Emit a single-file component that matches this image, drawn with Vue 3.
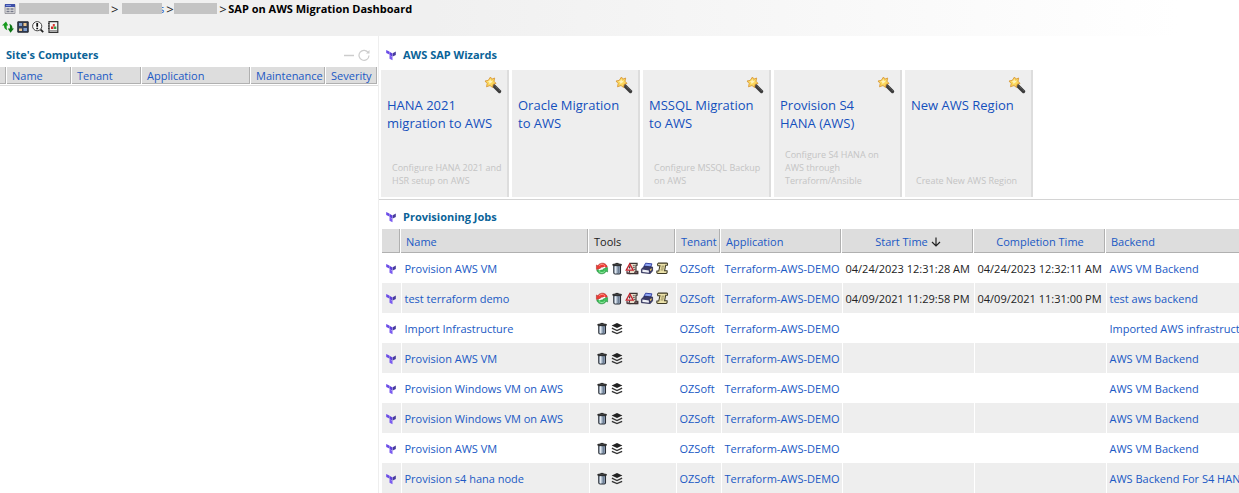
<script setup>
const siteColumns = [
  { label: '', width: 7 },
  { label: 'Name', width: 65 },
  { label: 'Tenant', width: 70 },
  { label: 'Application', width: 109 },
  { label: 'Maintenance', width: 75 },
  { label: 'Severity', width: 52 },
]

const wizards = [
  { title: 'HANA 2021 migration to AWS', note: 'Configure HANA 2021 and HSR setup on AWS' },
  { title: 'Oracle Migration to AWS', note: '' },
  { title: 'MSSQL Migration to AWS', note: 'Configure MSSQL Backup on AWS' },
  { title: 'Provision S4 HANA (AWS)', note: 'Configure S4 HANA on AWS through Terraform/Ansible' },
  { title: 'New AWS Region', note: 'Create New AWS Region' },
]

const full = ['sync', 'trash', 'plan', 'print', 'scroll']
const short = ['trash', 'layers']
const jobs = [
  { name: 'Provision AWS VM', tools: full, start: '04/24/2023 12:31:28 AM', end: '04/24/2023 12:32:11 AM', backend: 'AWS VM Backend' },
  { name: 'test terraform demo', tools: full, start: '04/09/2021 11:29:58 PM', end: '04/09/2021 11:31:00 PM', backend: 'test aws backend' },
  { name: 'Import Infrastructure', tools: short, backend: 'Imported AWS infrastructure' },
  { name: 'Provision AWS VM', tools: short, backend: 'AWS VM Backend' },
  { name: 'Provision Windows VM on AWS', tools: short, backend: 'AWS VM Backend' },
  { name: 'Provision Windows VM on AWS', tools: short, backend: 'AWS VM Backend' },
  { name: 'Provision AWS VM', tools: short, backend: 'AWS VM Backend' },
  { name: 'Provision s4 hana node', tools: short, backend: 'AWS Backend For S4 HANA' },
]
</script>

<template>
  <div class="page">
    <svg class="sprite" aria-hidden="true">
      <symbol id="terraform" viewBox="0 0 12 12">
        <path d="M1.200 1 4.400 2.600v3L1.200 4z" fill="#6a4be8" />
        <path d="M4.500 2.800 7.500 4.500v3.300L4.500 6.200z" fill="#5c3fdc" />
        <path d="M4.500 6.300 7.500 8v3.300L4.500 9.700z" fill="#7b5cf0" />
        <path d="M10.800 2.600 7.700 4.300v3.300l3.100-1.700z" fill="#463a9c" />
      </symbol>
      <symbol id="wand" viewBox="0 0 18 18">
        <path d="m9 9 6.500 6.500" stroke="#3a3a3a" stroke-width="3.400" stroke-linecap="round" />
        <path d="m10.500 9.700 5 5" stroke="#777" stroke-width="1" stroke-dasharray="1 1" />
        <path d="m6.500 1 1.200 2.200 3-1.200-.7 3.200 2 2.200-2.800.8-.7 3.300L6 9.500l-3.500 1.300.7-3.300L1 5l3.200-.6z" fill="#fbd75b" stroke="#d99b3c" stroke-width=".9" stroke-linejoin="round" />
        <path d="m6.200 3 .8 2 2-.5-1.200 1.700L5.500 8 5 6 3.200 5.300l2-.3z" fill="#fff3b8" />
      </symbol>
      <symbol id="sync" viewBox="0 0 14 14">
        <path d="M1 8V3.200l1.500.9C4.200.800 9.200.200 11.700 3.200l1 2-3.700 2C8 5.400 6.700 5.200 5.300 6l1.500 1.200z" fill="#ee3b36" stroke="#a52a24" stroke-width=".6" />
        <path d="M13 6v4.800l-1.500-.9c-1.700 3.300-6.700 3.900-9.200.9l-1-1.800L5 7.500c1 1.300 2.300 1.500 3.700.7L7.200 7z" fill="#3fc05a" stroke="#218238" stroke-width=".6" />
        <path d="m3.500 8.500 7-3" stroke="#fff" stroke-width="1.400" />
        <path d="M4 4C6 2 8.500 2 10 4" stroke="#ff9a8a" fill="none" />
        <path d="M4 10.300c2 1.600 4.500 1.500 6-.5" stroke="#9be8a8" fill="none" />
      </symbol>
      <symbol id="trash" viewBox="0 0 12 14">
        <path d="M2.500 4h7.300v7.600q0 1.400-1.400 1.400H4q-1.500 0-1.500-1.400z" fill="#8fa0b4" stroke="#252a32" stroke-width="1.100" />
        <path d="M4.500 4.500v7.800" stroke="#e4ebf2" stroke-width="1.900" />
        <path d="M7.800 4.500v7.800" stroke="#6d7c90" stroke-width="1.200" />
        <path d="M1.500 3.500V2.600Q6 1.200 10.700 2.600v.9z" fill="#666" stroke="#1b1b1b" />
        <path d="M4.500 1.500h3" stroke="#222" />
      </symbol>
      <symbol id="plan" viewBox="0 0 14 14">
        <path d="M5 1.500h7.500v2h-1.200v6.500h2v2.500H4z" fill="#e6dcc9" stroke="#3b3431" stroke-width="1.200" />
        <path d="M8 4h2M8 6h2M9 8h2" stroke="#555" />
        <path d="m4.500 2 3.800 6.800H.8z" fill="#f7eeee" stroke="#c3252e" stroke-width="1.400" />
        <path d="M4.500 4.500V7" stroke="#26201f" stroke-width="1.200" />
        <path d="M1.500 9.800v2.700H6M10 10.500h3v2h-3z" fill="#8c6870" stroke="#3c3032" />
      </symbol>
      <symbol id="print" viewBox="0 0 14 14">
        <path d="m5.500 1.300 6.800.7-1.500 4L3.500 5z" fill="#8fa6f5" stroke="#2c3a9c" />
        <path d="m2 6.500 3-2 8 1v4L10.500 12.500 1 11.500V8z" fill="#3a3a66" stroke="#23264e" stroke-width=".8" />
        <path d="m2 8.200 7 1v2.500l-7-.8z" fill="#f0f2f8" />
        <path d="m10 8 2-1.500v2L10.500 10z" fill="#e8c86a" />
      </symbol>
      <symbol id="scroll" viewBox="0 0 14 14">
        <path d="M3 1.200h9q1.500.3.800 2.300H11L9.800 9.500h2.700q.5 2.500-1.300 3H2.800Q.8 12 1.500 9.800h2L4.800 4H2.500Q1.500 2 3 1.200z" fill="#ece2aa" stroke="#3f3b25" stroke-width="1.100" />
        <path d="M6.500 4.500h3M6 6.500h3M5.500 8.500h3" stroke="#8a8254" />
      </symbol>
      <symbol id="layers" viewBox="0 0 14 14">
        <path d="m7 1 5.800 2.700L7 6.400 1.200 3.700z" fill="#222" />
        <path d="m1.500 6.700 5.500 2.500 5.500-2.500M1.500 10 7 12.500l5.500-2.500" fill="none" stroke="#333" stroke-width="1.500" />
      </symbol>
      <symbol id="window" viewBox="0 0 12 12">
        <path d="M1 1.500h10v9H1z" fill="#dcdcdc" stroke="#8b8b93" stroke-width=".8" />
        <path d="M1 1h10v3H1z" fill="#3d4fa8" />
        <path d="M2 2.500h5" stroke="#7d94e0" />
        <path d="M2.500 6h3M6.500 6h3M2.500 8.500h3M6.500 8.500h3" stroke="#777b8c" stroke-width="1.300" />
      </symbol>
      <symbol id="reload" viewBox="0 0 12 12">
        <path d="M4 .5 0 4.500h2c0 2.500 1 4 3.500 4.800-.8-1.500-1-2.800-.8-4.800H6.200z" fill="#159a1c" />
        <path d="M8.500 11.800 12 7.500h-1.500c0-2.500-1-4-3.200-4.800.6 1.500.8 2.800.6 4.800H5.800z" fill="#0c7614" />
      </symbol>
      <symbol id="tiles" viewBox="0 0 12 12">
        <path d="M.8.800h10.400v10.400H.8z" fill="#34405a" stroke="#20242c" />
        <path d="M6.500 2h3v3h-3zM2 7.500h3v2.500H2z" fill="#ecc58c" />
        <path d="M2 2h3v3H2zM6.500 7h3.500v3H6.500z" fill="#7f9fd0" />
      </symbol>
      <symbol id="inspect" viewBox="0 0 12 12">
        <path d="m8.200 8.200 3 3" stroke="#222" stroke-width="1.800" />
        <circle cx="5.200" cy="5.200" r="4.600" fill="#fafafa" stroke="#444" />
        <path d="M5.200 2v3.800M5.200 6.800v1.500" stroke="#111" stroke-width="1.800" />
      </symbol>
      <symbol id="report" viewBox="0 0 12 12">
        <path d="M2 .7h8.800v10.600H2z" fill="#f5f5f5" stroke="#333" stroke-width="1.200" />
        <path d="M1 2.500h1.500M1 5h1.500M1 7.500h1.500" stroke="#333" />
        <path d="M5.800 3h2v2.500h-2z" fill="#d83a32" />
        <path d="M4 5.500h2.500v2.500H4z" fill="#d22d27" />
        <path d="M7 5.500h2.300v2.500H7z" fill="#35a04b" />
        <path d="M3 9.800h7" stroke="#777" />
      </symbol>
    </svg>

    <header class="topbar">
      <nav class="crumbs" aria-label="Breadcrumb">
        <svg class="icon12"><use href="#window" /></svg>
        <span class="mask mask-site"></span>
        <span class="sep">&gt;</span>
        <a class="tail" href="#"><span class="mask mask-group"></span>s</a>
        <span class="sep">&gt;</span>
        <span class="mask mask-item"></span>
        <span class="sep">&gt;</span>
        <h1>SAP on AWS Migration Dashboard</h1>
      </nav>
      <div class="toolbar">
        <button v-for="n in ['reload', 'tiles', 'inspect', 'report']" :key="n" :aria-label="n">
          <svg class="icon12"><use :href="'#' + n" /></svg>
        </button>
      </div>
    </header>

    <main class="panes">
      <section class="site">
        <div class="site-head">
          <h2>Site's Computers</h2>
          <button aria-label="Collapse">
            <svg class="icon12" viewBox="0 0 12 12"><path d="M1 6.500h10" stroke="#ccc" stroke-width="1.500" /></svg>
          </button>
          <button aria-label="Refresh">
            <svg class="icon12" viewBox="0 0 12 12">
              <path d="M10.300 3.800A5 5 0 1 0 11 6.500" fill="none" stroke="#ccc" stroke-width="1.200" />
              <path d="M11.500 1v3.500H8z" fill="#ccc" />
            </svg>
          </button>
        </div>
        <div class="site-list">
          <table class="site-table">
            <colgroup><col v-for="c in siteColumns" :key="c.label" :style="{ width: c.width + 'px' }" /></colgroup>
            <thead>
              <tr><th v-for="c in siteColumns" :key="c.label"><a v-if="c.label" href="#">{{ c.label }}</a></th></tr>
            </thead>
          </table>
        </div>
      </section>

      <div class="content">
        <section class="wizards">
          <div class="section-head"><svg class="icon12"><use href="#terraform" /></svg><h2>AWS SAP Wizards</h2></div>
          <div class="cards">
            <article v-for="w in wizards" :key="w.title" class="card">
              <svg class="wand"><use href="#wand" /></svg>
              <a href="#">{{ w.title }}</a>
              <p>{{ w.note }}</p>
            </article>
          </div>
        </section>

        <section class="jobs">
          <div class="section-head"><svg class="icon12"><use href="#terraform" /></svg><h2>Provisioning Jobs</h2></div>
          <div class="job-list">
            <table class="job-table">
              <colgroup>
                <col class="c-icon" /><col class="c-name" /><col class="c-tools" /><col class="c-tenant" />
                <col class="c-app" /><col class="c-time" /><col class="c-time" /><col />
              </colgroup>
              <thead>
                <tr>
                  <th></th>
                  <th><a href="#">Name</a></th>
                  <th>Tools</th>
                  <th><a href="#">Tenant</a></th>
                  <th><a href="#">Application</a></th>
                  <th class="mid">
                    <a href="#">Start Time</a>
                    <svg class="arrow" viewBox="0 0 10 10"><path d="M5 .5v8.500M1 5l4 4 4-4" fill="none" stroke="#222" stroke-width="1.200" /></svg>
                  </th>
                  <th class="mid"><a href="#">Completion Time</a></th>
                  <th><a href="#">Backend</a></th>
                </tr>
              </thead>
              <tbody>
                <tr v-for="(j, i) in jobs" :key="i">
                  <td><svg class="icon12"><use href="#terraform" /></svg></td>
                  <td><a href="#">{{ j.name }}</a></td>
                  <td>
                    <div class="tools">
                      <button v-for="t in j.tools" :key="t" :aria-label="t"><svg class="tool"><use :href="'#' + t" /></svg></button>
                    </div>
                  </td>
                  <td><a href="#">OZSoft</a></td>
                  <td><a href="#">Terraform-AWS-DEMO</a></td>
                  <td>{{ j.start }}</td>
                  <td>{{ j.end }}</td>
                  <td><a href="#">{{ j.backend }}</a></td>
                </tr>
              </tbody>
            </table>
          </div>
        </section>
      </div>
    </main>
  </div>
</template>

<style>
body { margin: 0; background: #fff; }
</style>

<style scoped>
.page {
  height: 100vh;
  display: flex;
  flex-direction: column;
  overflow: hidden;
  font: 11px/16px "Open Sans", "Noto Sans", sans-serif;
  color: #222;
}
.sprite { display: none; }
a { color: #2059c4; text-decoration: none; }
button { display: flex; padding: 0; border: 0; background: none; }
h1, h2, p { margin: 0; }
h2 { font-size: 11px; line-height: 18px; font-weight: 700; color: #0a6398; }
.icon12 { display: block; width: 12px; height: 12px; flex: none; }

.topbar { flex: none; height: 36px; background: linear-gradient(90deg, #f0f0f0 35%, #fff 95%); }
.crumbs { display: flex; align-items: center; height: 18px; padding-left: 4px; }
.mask { flex: none; height: 11px; background: #c4c4c4; margin-bottom: 2px; }
.mask-site { width: 90px; margin-left: 3px; }
.mask-group { position: relative; width: 40px; margin-right: -3px; }
.mask-item { width: 43px; }
.sep { width: 8px; padding-left: 2px; font-size: 13px; }
.tail { display: flex; align-items: center; padding-left: 3px; }
h1 { padding-left: 1px; font-size: 11px; line-height: 18px; color: #000; white-space: nowrap; }
.toolbar { display: flex; gap: 3px; padding: 3px 0 0 2px; }

.panes { flex: 1; display: flex; min-height: 0; }
.site { width: 378px; flex: none; }
.site-head { display: flex; align-items: center; gap: 3px; padding: 10px 8px 3px 6px; }
.site-head h2 { flex: 1; }
table { border-collapse: collapse; table-layout: fixed; width: 100%; }
th, td { padding: 1px 0 0 3px; text-align: left; font-weight: 400; white-space: nowrap; }
th { background: #ddd; box-shadow: inset -1px 0 #fff, inset -2px -1px #b0b0b0; }
.site-list { padding-bottom: 1px; border-bottom: 1px solid #ddd; }
.site-table th { height: 17px; padding: 0 0 0 5px; }

.content { flex: 1; min-width: 0; border-left: 1px solid #eee; overflow: hidden; }
.section-head { display: flex; align-items: center; gap: 6px; padding-left: 6px; }
.wizards { padding: 10px 0 2px; border-bottom: 1px solid #d4d4d4; }
.cards { display: flex; gap: 3px; padding: 6px 0 0 2px; }
.card {
  position: relative;
  display: flex;
  flex-direction: column;
  justify-content: space-between;
  box-sizing: border-box;
  width: 128px;
  height: 127px;
  padding: 26px 3px 10px 6px;
  background: #eee;
  border-right: 2px solid #ddd;
}
.card a { padding-right: 8px; font-size: 13px; line-height: 18px; color: #1450bd; }
.card p { padding-left: 5px; font-size: 9px; line-height: 13px; color: #c4c4c4; }
.wand { position: absolute; top: 6px; right: 5px; width: 18px; height: 18px; }

.jobs { padding-top: 8px; }
.job-list { padding: 3px 0 0 3px; }
.job-table th { height: 23px; padding-left: 5px; }
.job-table th:last-child { box-shadow: inset 0 -1px #b0b0b0; }
.job-table td { height: 29px; border-right: 1px solid #fff; }
.job-table td:last-child { border-right: 0; }
.job-table th.mid { text-align: center; padding-left: 0; }
tbody tr:nth-child(even) { background: #eee; }
.c-icon { width: 19px; }
.c-name { width: 188px; }
.c-tools { width: 87px; }
.c-tenant { width: 45px; }
.c-app { width: 121px; }
.c-time { width: 132px; }
.arrow { width: 10px; height: 10px; margin-left: 3px; vertical-align: -1px; }
.tools { display: flex; gap: 1px; padding-left: 2px; }
.tool { display: block; width: 14px; height: 13px; }
</style>
